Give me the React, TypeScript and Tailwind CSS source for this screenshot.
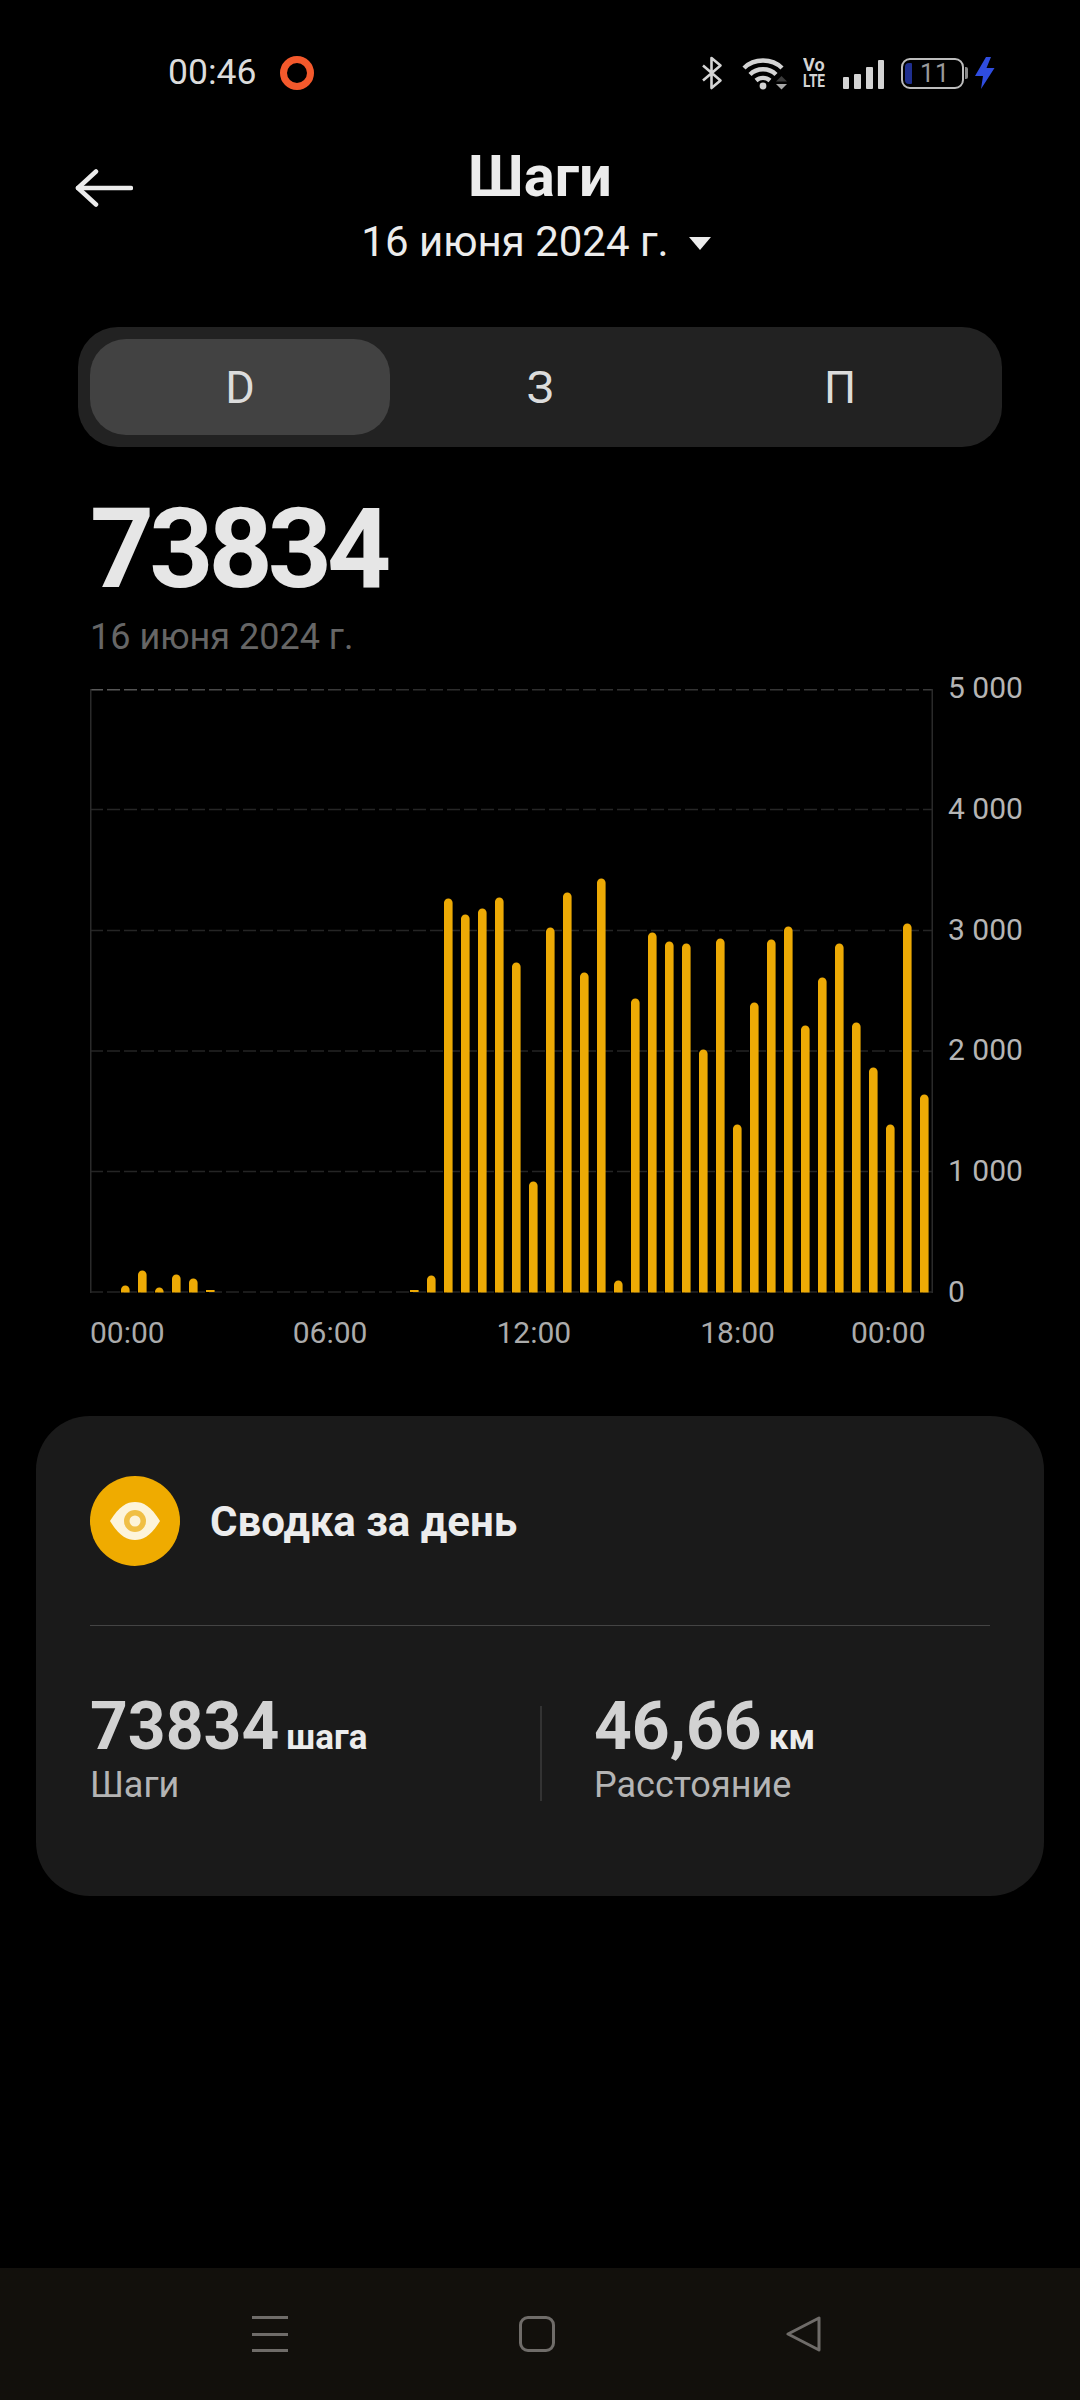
const hourBars = [
  7, 22, 5, 18, 14, 2, 0, 0, 0, 0, 0, 0, 0, 0, 0, 0, 0, 2, 17, 394, 378, 384, 395, 330, 111, 365, 400, 320, 414, 12, 294,
  360, 351, 349, 243, 354, 168, 290, 353, 366, 267, 315, 349, 270, 225, 168, 369, 198,
]

const yLabels = ['5 000', '4 000', '3 000', '2 000', '1 000', '0']

function StatusIcons() {
  return (
    <div className="flex items-center">
      {/* bluetooth */}
      <svg width="22" height="34" viewBox="0 0 22 34" fill="none" stroke="#d4d4d4" strokeWidth="2.6">
        <path d="M2 9.5 L19.5 24.5 L10.5 32 V2 L19.5 9.5 L2 24.5" strokeLinejoin="round" />
      </svg>
      {/* wifi */}
      <svg className="ml-[19px]" width="46" height="34" viewBox="0 0 46 34" fill="none">
        <path d="M2 12 C12 2 30 2 40 12" stroke="#d4d4d4" strokeWidth="4.4" />
        <path d="M8 18.5 C15 11.5 27 11.5 34 18.5" stroke="#d4d4d4" strokeWidth="4.4" />
        <path d="M14 24.5 C18 21 24 21 28 24.5" stroke="#d4d4d4" strokeWidth="4.4" />
        <circle cx="21" cy="30" r="3.4" fill="#d4d4d4" />
        <path d="M39.5 20 L45 25.5 H34 Z" fill="#3a3a3a" />
        <path d="M34 28 H45 L39.5 33.5 Z" fill="#a8a8a8" />
      </svg>
      {/* volte */}
      <div className="ml-[15px] w-[23px] h-[32px] flex flex-col font-bold text-[#d4d4d4] text-[19px] leading-[15.5px]">
        <span className="origin-left scale-x-[0.95] whitespace-nowrap">Vo</span>
        <span className="origin-left scale-x-[0.72] whitespace-nowrap">LTE</span>
      </div>
      {/* signal */}
      <div className="ml-[17px] flex items-end gap-[5px] h-[30px] mt-[1px]">
        <div className="w-[6px] h-[12px] rounded-[1px] bg-[#d4d4d4]" />
        <div className="w-[7px] h-[15px] rounded-[1px] bg-[#d4d4d4]" />
        <div className="w-[7px] h-[22px] rounded-[1px] bg-[#d4d4d4]" />
        <div className="w-[6px] h-[29px] rounded-[1px] bg-[#d4d4d4]" />
      </div>
      {/* battery */}
      <div className="ml-[17px] flex items-center">
        <div className="w-[63px] h-[31px] rounded-[9px] border-[2px] border-[#bdbdbd] flex items-center pl-[2px]">
          <div className="w-[7px] h-[21px] rounded-l-[4px] rounded-r-[1px] bg-[#1f2f8f]" />
          <span className="ml-[8px] text-[25px] leading-none text-[#9a9a9a] tracking-[1px]">11</span>
        </div>
        <div className="ml-[1px] w-[3px] h-[12px] rounded-r-[2px] bg-[#8a8a8a]" />
      </div>
      {/* charging */}
      <svg className="ml-[7px]" width="20" height="32" viewBox="0 0 20 32">
        <path d="M11 0 L0 19 H8 L6 32 L19.5 11 H11.5 L16 0 Z" fill="#2f4de0" />
      </svg>
    </div>
  )
}

function Chart() {
  return (
    <div className="flex items-start pl-[90px] mt-[30px] shrink-0">
      <div className="w-[843px] shrink-0">
        <svg width="843" height="604" viewBox="0 0 843 604" className="block">
          <defs>
            <linearGradient id="topLine" gradientUnits="userSpaceOnUse" x1="0" y1="0" x2="843" y2="0">
              <stop offset="0" stopColor="#5a5a5a" />
              <stop offset="0.4" stopColor="#2c2c2c" />
              <stop offset="1" stopColor="#3a3a3a" />
            </linearGradient>
          </defs>
          <line x1="0" x2="843" y1="0.75" y2="0.75" stroke="url(#topLine)" strokeWidth="1.5" strokeDasharray="13 4" />
          {[120.5, 241.5, 362, 482.5, 603].map((y) => (
            <line key={y} x1="0" x2="843" y1={y} y2={y} stroke="#252525" strokeWidth="1.5" strokeDasharray="13 4" />
          ))}
          <line x1="0.75" x2="0.75" y1="0" y2="604" stroke="#2a2a2a" strokeWidth="1.5" />
          <line x1="842.25" x2="842.25" y1="0" y2="604" stroke="#2a2a2a" strokeWidth="1.5" />
          {hourBars.map((h, i) =>
            h > 0 ? (
              <path
                key={i}
                fill="#edaa05"
                d={
                  h < 5
                    ? `M${31 + 17 * i} 603 h8.6 v-${h} h-8.6 Z`
                    : `M${31 + 17 * i} 603.5 v-${h - 4.3} a4.3 4.3 0 0 1 8.6 0 v${h - 4.3} Z`
                }
              />
            ) : null
          )}
        </svg>
        <div className="flex mt-[22px] text-[30px] leading-[36px] text-[#ababab]">
          <span>00:00</span>
          <span className="ml-[128px]">06:00</span>
          <span className="ml-[129px]">12:00</span>
          <span className="ml-[129px]">18:00</span>
          <span className="ml-[76px]">00:00</span>
        </div>
      </div>
      <div className="ml-[15px] -mt-[19px] h-[640px] flex flex-col justify-between text-[30px] leading-[36px] text-[#b5b5b5] whitespace-nowrap">
        {yLabels.map((l) => (
          <span key={l}>{l}</span>
        ))}
      </div>
    </div>
  )
}

function Stat({ value, unit, label }: { value: string; unit: string; label: string }) {
  return (
    <div>
      <div className="flex items-baseline">
        <span className="text-[66px] leading-[70px] font-bold text-[#d2d2d2]">{value}</span>
        <span className="ml-[7px] text-[35px] leading-[40px] font-bold text-[#ececec]">{unit}</span>
      </div>
      <div className="mt-[3px] text-[36px] leading-[40px] text-[#b4b4b4]">{label}</div>
    </div>
  )
}

export default function App() {
  return (
    <div className="w-[1080px] h-[2400px] bg-black flex flex-col overflow-hidden font-[Roboto,sans-serif] text-white">
      {/* Status bar */}
      <div className="h-[146px] flex items-center justify-between pl-[168px] pr-[85px] shrink-0">
        <div className="flex items-center">
          <span className="text-[35.5px] leading-none text-[#dcdcdc]">00:46</span>
          <div className="ml-[24px] w-[34px] h-[34px] rounded-full border-[7px] border-[#f4592c]" />
        </div>
        <StatusIcons />
      </div>

      {/* Header */}
      <div className="grid grid-cols-[1fr_auto_1fr] h-[126px] shrink-0">
        <div className="pl-[75px] pt-[23px]">
          <svg width="58" height="38" viewBox="0 0 58 38" fill="none" stroke="#ececec" strokeWidth="4.5" strokeLinecap="round" strokeLinejoin="round">
            <path d="M56 19 H3" />
            <path d="M21 2.5 L3 19 L21 35.5" />
          </svg>
        </div>
        <div className="flex flex-col items-center">
          <h1 className="text-[58px] leading-[60px] font-bold text-[#ececec]">Шаги</h1>
          <div className="mt-[6px] mr-[8px] flex items-center text-[42px] leading-[60px] text-[#ececec]">
            <span>16 июня 2024 г.</span>
            <div className="ml-[20px] mt-[2px] w-0 h-0 border-l-[11px] border-r-[11px] border-t-[13px] border-l-transparent border-r-transparent border-t-[#ececec]" />
          </div>
        </div>
        <div />
      </div>

      {/* Tabs */}
      <div className="mt-[55px] mx-[78px] h-[120px] rounded-[40px] bg-[#222222] flex items-center px-[12px] shrink-0">
        <div className="w-[300px] h-[96px] pt-[2px] rounded-[36px] bg-[#424242] flex items-center justify-center text-[45px] text-[#dcdcdc]">
          D
        </div>
        <div className="w-[300px] pt-[2px] flex justify-center text-[45px] text-[#dcdcdc]">З</div>
        <div className="w-[300px] pt-[2px] flex justify-center text-[45px] text-[#dcdcdc]">П</div>
      </div>

      {/* Total */}
      <div className="pl-[90px] mt-[42px] shrink-0">
        <div className="text-[112px] leading-[120px] font-bold tracking-[-5px] text-[#e6e6e6]">73834</div>
        <div className="mt-[6px] text-[36px] leading-[44px] text-[#666666]">16 июня 2024 г.</div>
      </div>

      <Chart />

      {/* Summary card */}
      <div className="mt-[65px] mx-[36px] h-[480px] rounded-[54px] bg-[#1a1a1a] px-[54px] shrink-0">
        <div className="h-[210px] border-b-[1.5px] border-[#444444] flex items-center">
          <div className="w-[90px] h-[90px] rounded-full bg-[#efab00] flex items-center justify-center">
            <svg width="52" height="40" viewBox="0 0 52 40">
              <path d="M1 20 C10 5 18 1 26 1 C34 1 42 5 51 20 C42 35 34 39 26 39 C18 39 10 35 1 20 Z" fill="#fdf4da" />
              <circle cx="26" cy="20" r="11" fill="#f0bf45" />
              <circle cx="26" cy="20" r="5.5" fill="#fdf4da" />
            </svg>
          </div>
          <span className="ml-[30px] mt-[2px] text-[42px] font-bold text-[#ececec]">Сводка за день</span>
        </div>
        <div className="flex items-start mt-[66px]">
          <div className="w-[450px]">
            <Stat value="73834" unit="шага" label="Шаги" />
          </div>
          <div className="w-[2px] h-[95px] mt-[14px] bg-[#333333]" />
          <div className="ml-[52px]">
            <Stat value="46,66" unit="км" label="Расстояние" />
          </div>
        </div>
      </div>

      {/* Nav bar */}
      <div className="mt-auto h-[132px] bg-[#12100c] flex items-start justify-between pl-[252px] pr-[258px] pt-[48px] shrink-0">
        <div className="w-[36px] h-[36px] flex flex-col justify-between">
          <div className="h-[3px] bg-[#6f6c69]" />
          <div className="h-[3px] bg-[#6f6c69]" />
          <div className="h-[3px] bg-[#6f6c69]" />
        </div>
        <div className="w-[36px] h-[36px] rounded-[9px] border-[3px] border-[#6f6c69]" />
        <svg width="36" height="36" viewBox="0 0 36 36" fill="none" stroke="#6f6c69" strokeWidth="3" strokeLinejoin="round">
          <path d="M2 18 L33 2 V34 Z" />
        </svg>
      </div>
    </div>
  )
}
